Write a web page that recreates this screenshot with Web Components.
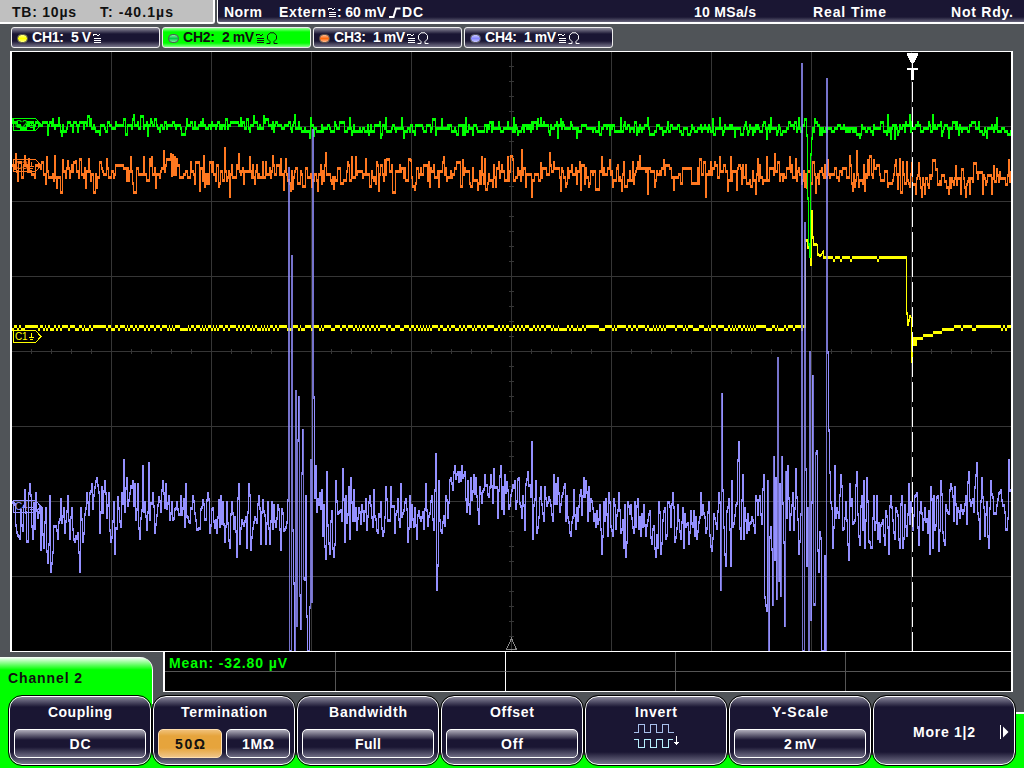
<!DOCTYPE html>
<html lang="en">
<head>
<meta charset="utf-8">
<title>Oscilloscope</title>
<style>
    body {
        margin: 0;
        width: 1024px;
        height: 768px;
        overflow: hidden;
        background: #505458;
        color: white;
        font: bold 14px/16px "Liberation Sans", Arial, sans-serif;
    }
</style>
</head>
<body>
<scope-app></scope-app>
<script>
// text stretched to a given width by letter spacing
class FitText extends HTMLElement {
    constructor() {
        super();
        const shadowRoot = this.attachShadow({ mode: 'open' });
        shadowRoot.innerHTML = `<style>
            :host { display: inline-block; height: 16px; flex: none; }
            span { display: inline-block; white-space: pre; }
            </style><span><slot></slot></span>`;
    }
    connectedCallback() {
        const w = Number(this.getAttribute('w'));
        const span = this.shadowRoot.querySelector('span');
        const count = this.textContent.length;
        this.style.width = w + 'px';
        if (count > 1) {
            const natural = span.getBoundingClientRect().width;
            span.style.letterSpacing = ((w - natural) / (count - 1)).toFixed(3) + 'px';
        }
    }
}

class ScopeSymbol extends HTMLElement {
    constructor() {
        super();
        const shapes = {
            bw: '<svg width="8" height="10" viewBox="0 0 8 10"><path d="M.5 3V2l1-1h1l2 1.5h1L7 1M.5 5.5h7M.5 7.5h7M.5 9.5h7" /></svg>',
            ohm: '<svg width="12" height="12" viewBox="0 0 12 12"><path d="M.5 11.5H4V9.5L1.5 7V3.5L4 .8h4L10.500 3.500V7L8 9.500v2h3.500" /></svg>',
            edge: '<svg width="12" height="11" viewBox="0 0 12 11"><path stroke-width="2" d="M0 10h4.500L7 1.500h4.500" /></svg>',
            next: '<svg width="10" height="16" viewBox="0 0 10 16"><path d="M1.500 1v14" /><path d="M4 2.500L9.500 8L4 13.500z" fill="currentColor" stroke="none" /></svg>',
            invert: `<svg width="48" height="26" viewBox="0 0 48 26">
                <path stroke="#a8c0ec" d="M.5 9.500h5v-8h6v8h6v-8h6v8h6v-8h6v8h5" />
                <path stroke="#b8f0ff" d="M.5 16.500h5v8h6v-8h6v8h6v-8h6v8h6v-8h4" />
                <path stroke="#fff" d="M43.500 13v8M41.500 19l2 2l2-2" />
            </svg>`
        };
        const shadowRoot = this.attachShadow({ mode: 'open' });
        shadowRoot.innerHTML = `
            <style>
            :host { display: inline-flex; flex: none; }
            svg { fill: none; stroke: currentColor; shape-rendering: crispEdges; }
            :host([name="ohm"]) svg, :host([name="edge"]) svg, :host([name="next"]) svg { shape-rendering: auto; }
            </style>
            ${shapes[this.getAttribute('name')]}
        `;
    }
}

class ScopeHeader extends HTMLElement {
    constructor() {
        super();
        const shadowRoot = this.attachShadow({ mode: 'open' });
        shadowRoot.innerHTML = `
            <style>
            :host { display: flex; gap: 2px; height: 24px; }
            div { display: flex; box-sizing: border-box; height: 24px; padding-top: 4px; border-bottom: 2px solid white; }
            .time {
                width: 215px;
                padding-left: 12px;
                gap: 24px;
                color: #111;
                background: #c0c0c0;
                border-right: 2px solid white;
                border-bottom-right-radius: 3px;
            }
            .status {
                flex: 1;
                padding-left: 6px;
                background: linear-gradient(#1a1633 0 17px, #66647a 22px);
                border-left: 1px solid white;
                border-bottom-left-radius: 3px;
            }
            scope-symbol[name="bw"] { margin: 3px 1px 0 2px; }
            scope-symbol[name="edge"] { margin: 3px 1px 0 3px; }
            .norm { margin-right: 17px; }
            .rate { margin-left: 271px; }
            .mode { margin-left: 57px; }
            .state { margin-left: 65px; }
            </style>
            <div class="time"><fit-text w="64">TB: 10µs</fit-text><fit-text w="73">T: -40.1µs</fit-text></div>
            <div class="status">
                <fit-text class="norm" w="38">Norm</fit-text>
                <fit-text w="47">Extern</fit-text><scope-symbol name="bw"></scope-symbol><fit-text w="49">: 60 mV</fit-text><scope-symbol name="edge"></scope-symbol><fit-text w="21">DC</fit-text>
                <fit-text class="rate" w="62">10 MSa/s</fit-text>
                <fit-text class="mode" w="73">Real Time</fit-text>
                <fit-text class="state" w="62">Not Rdy.</fit-text>
            </div>
        `;
    }
}

class ChannelTab extends HTMLElement {
    constructor() {
        super();
        const shadowRoot = this.attachShadow({ mode: 'open' });
        shadowRoot.innerHTML = `
            <style>
            :host {
                display: flex;
                box-sizing: border-box;
                width: 149px;
                height: 21px;
                padding: 1px 0 0 5px;
                border: 1px solid #eee;
                border-radius: 3px;
                background: linear-gradient(#8c8a9a 0, #1a1633 6px 13px, #77758a 19px);
            }
            :host([active]) { background: linear-gradient(#9f9 0, #0f0 4px 15px, #8f8 19px); color: #111; }
            i {
                width: 9px;
                height: 7px;
                margin: 5px 4px 0 0;
                border: 1px solid #555;
                border-radius: 5px;
                box-sizing: content-box;
                background: linear-gradient(#fff8, #fff0 50%, #fff8), var(--dot);
            }
            .name { margin-right: 7px; }
            scope-symbol { margin: 4px 0 0 2px; }
            scope-symbol[name="ohm"] { margin-top: 3px; }
            </style>
            <i></i><fit-text class="name" w="32">${this.getAttribute('name')}:</fit-text><slot></slot>
            <scope-symbol name="bw"></scope-symbol>
            ${this.hasAttribute('ohm') ? '<scope-symbol name="ohm"></scope-symbol>' : ''}
        `;
    }
}

// x,y pairs of the curve's turning points, in screen pixels
const CH4 = `12,502 15,504 17,532 20,538 21,510 23,530 25,490 27,541 30,484 32,526 33,538 34,503 35,528 36,493 38,517 40,507
41,549 42,508 44,547 46,508 48,562 50,496 51,571 53,552 54,526 56,526 58,538 61,499 62,522 64,508 65,532 68,496 70,538 72,508
75,541 78,533 80,571 81,508 83,541 85,514 87,493 89,514 90,493 92,484 93,508 95,487 97,478 98,485 100,532 102,487 103,512
105,481 107,517 109,493 111,541 114,502 115,553 118,497 121,526 124,460 125,511 127,478 128,505 130,493 133,481 134,505
135,484 136,519 138,484 140,538 143,466 144,511 145,502 147,529 149,463 150,519 153,493 155,532 159,497 161,511 163,481
165,507 166,484 167,508 169,496 170,519 172,502 173,519 177,502 180,514 181,496 182,514 184,499 185,526 186,484 187,516
190,522 193,496 195,513 197,529 200,528 203,500 205,519 208,493 210,532 213,508 217,532 219,500 220,526 221,496 222,523
223,502 225,541 227,502 228,523 230,547 232,502 234,528 235,517 237,556 239,484 240,543 242,520 244,525 246,517 247,547
249,484 251,549 253,528 255,517 257,522 259,496 261,543 263,500 266,543 268,502 270,543 272,502 273,528 274,505 276,526
278,505 281,549 282,509 284,530 286,527 288,500 289,168 290,651 291,651 292,256 293,530 294,583 295,651 296,391 297,625
299,397 300,595 301,628 303,430 304,578 305,579 306,496 308,651 309,651 310,607 311,460 312,601 313,130 314,397 315,497
316,466 317,511 320,493 321,508 322,490 323,535 324,505 326,558 327,472 328,525 330,553 332,511 334,556 336,481 338,513
341,510 342,520 343,469 345,541 346,496 347,522 349,487 350,538 351,478 353,520 354,490 355,520 356,508 357,529 359,508
361,523 362,505 364,520 366,499 367,529 370,496 371,505 373,526 374,490 375,516 378,532 381,502 383,535 386,487 388,520
390,520 391,487 392,506 394,506 395,532 398,499 400,526 401,484 402,516 404,510 406,499 408,541 410,496 411,526 412,505
414,526 415,508 417,538 419,511 421,520 423,512 424,528 426,484 428,525 430,513 432,496 434,529 435,490 436,454 437,589
438,565 439,481 440,520 442,532 444,516 445,525 446,496 448,517 451,478 453,489 455,466 456,478 458,472 459,481 460,472
461,480 462,466 463,477 465,472 466,499 467,511 468,481 470,513 471,478 472,499 474,475 475,493 476,478 479,523 480,487
482,502 485,475 489,496 491,475 493,502 494,469 495,487 497,487 498,517 499,490 501,466 502,508 503,487 504,513 505,475
506,492 507,482 509,508 512,490 515,481 516,508 519,478 520,503 522,517 523,496 525,529 526,484 528,472 531,496 532,442
533,538 536,481 537,532 539,517 541,487 544,520 545,487 547,505 549,497 551,505 553,520 554,475 555,503 556,484 557,503
558,478 560,511 563,493 565,484 566,520 567,496 568,517 571,535 573,517 574,490 576,528 577,508 578,520 581,490 582,514
584,478 585,496 586,481 588,520 589,487 590,510 591,499 594,520 595,514 596,526 597,511 598,523 600,505 602,553 604,502
605,520 606,499 608,535 609,493 611,526 613,535 614,499 616,528 619,493 621,532 623,520 624,547 625,505 626,556 628,502
630,513 631,505 634,532 635,502 636,526 638,499 639,528 640,517 641,535 642,514 643,526 644,505 646,535 648,520 650,511
652,543 654,526 656,556 657,535 658,547 659,502 661,553 663,520 665,508 666,538 669,502 671,526 673,493 675,541 677,528
678,505 681,538 683,508 684,547 685,514 686,526 688,523 689,543 691,511 693,526 694,511 695,535 696,517 697,538 700,517
701,493 702,514 703,505 706,532 709,502 710,535 712,550 714,514 717,528 719,493 720,502 721,589 722,394 723,490 724,527
726,565 727,511 729,499 731,565 732,481 733,526 735,515 737,503 739,442 740,528 741,538 743,475 744,538 745,508 747,532
748,514 749,529 752,517 755,532 756,496 758,514 760,496 762,523 764,475 765,597 767,610 768,481 769,651 770,537 771,527
773,604 774,457 775,559 776,478 777,598 778,358 779,580 780,484 781,595 782,457 783,503 785,625 786,472 787,517 788,466
790,529 793,493 794,529 796,469 797,497 799,553 801,514 802,64 803,651 804,651 805,223 806,469 807,565 808,508 809,651
810,352 811,619 812,502 813,376 814,604 815,604 816,453 817,451 818,550 819,571 820,532 821,538 822,651 824,651 825,556
826,651 827,79 828,352 829,430 830,472 832,508 833,547 835,466 836,517 837,508 839,517 841,475 843,529 846,502 847,520
849,559 850,484 851,505 852,499 853,523 855,520 857,472 858,514 860,544 862,496 863,529 864,481 865,547 867,478 869,541
872,547 874,496 875,529 877,496 878,538 879,523 880,541 881,525 883,520 885,544 886,511 889,553 891,496 893,520 895,538
896,508 900,547 902,496 903,547 905,505 907,535 909,484 910,523 911,502 913,529 915,496 917,493 919,544 921,502 923,529
925,508 928,532 929,511 930,553 931,487 933,547 934,496 935,529 938,496 939,550 941,481 943,532 945,544 946,505 949,513
951,484 954,520 955,487 957,523 958,508 960,517 961,505 963,513 966,496 967,523 969,472 971,505 973,499 974,511 975,487
977,463 978,513 980,538 982,478 985,535 987,502 989,547 991,481 994,513 996,513 999,493 1001,490 1003,505 1007,529
1009,460 1010,490`;

const CH3_PEAKS = `16,154 47,157 57,187 63,160 68,161 76,161 86,187 97,187 131,157 144,157 152,157 156,187 164,151 171,154
172,175 173,155 174,174 175,157 200,190 207,183 225,148 230,196 239,154 250,157 284,189 291,190 293,188 318,190 334,188
352,157 356,157 379,190 385,160 411,160 444,157 463,160 482,157 508,157 532,196 541,163 561,190 602,157 610,160 622,190
648,193 664,160 706,196 720,157 728,190 731,157 756,193 767,157 775,154 790,157 805,186 807,187 828,160 853,190 857,151
865,190 868,160 874,160 896,160 898,188 916,193 919,163 925,193 949,193 966,196 970,193 983,193 992,193 994,166`;

const CH2_PEAKS = `59,118 62,135 134,115 148,135 241,118 295,115 311,118 314,135 350,118 386,118 402,118 466,118 514,118
541,118 558,137 577,137 621,118 648,118 720,118 735,136 767,138 771,118 799,118 807,135 808,198 809,244 810,256 811,154
812,138 888,115 891,138 895,138 910,115 933,115 942,135 997,118`;

const CH1 = `12,326 805,326 806,240 807,240 808,247 810,247 811,264 812,211 813,237 814,244 816,244 817,245 818,254 820,255
823,251 824,257 906,257 907,313 908,324 910,316 911,318 912,361 913,338 914,344 915,338 916,344 917,338 922,338 923,335
932,335 933,332 941,332 942,329 953,329 954,326 1011,326`;

function parsePoints(text) {
    return text.trim().split(/\s+/).map(p => p.split(',').map(Number));
}

function random(seed) {
    return () => {
        seed = (seed * 1664525 + 1013904223) >>> 0;
        return (seed >>> 8) / 16777216;
    };
}

// fills the samples between turning points; jitter moves them off the straight line
function interpolate(points, jitter) {
    const rnd = random(3);
    const out = [];
    for (let i = 0; i < points.length - 1; i++) {
        const [x0, y0] = points[i];
        const [x1, y1] = points[i + 1];
        out[x0] = y0;
        for (let x = x0 + 1; x < x1; x++) {
            let t = (x - x0) / (x1 - x0) + (rnd() - 0.5) * jitter;
            t = Math.min(1, Math.max(0, t));
            out[x] = y0 + (y1 - y0) * t;
        }
        out[x1] = y1;
    }
    return out;
}

function noise(seed, mean, amp, hold, peaks) {
    const rnd = random(seed);
    const out = [];
    for (let x = 12; x <= 1011; x++) {
        const n = (rnd() + rnd() + rnd() - 1.5) * amp;
        out[x] = rnd() < hold && out[x - 1] ? out[x - 1] : mean(x) + Math.round(n / 3) * 3;
    }
    parsePoints(peaks).forEach(([x, y]) => {
        out[x] = y;
        // a peak is one sample wide
        if (Math.abs(out[x + 1] - mean(x)) > amp / 2) out[x + 1] = mean(x);
    });
    return out;
}

// one vertical bar per pixel column, three pixels high at least
function columns(values) {
    let d = '';
    let tall = '';
    for (let x = 12; x <= 1010; x++) {
        const a = values[x];
        const b = values[x + 1] === undefined ? a : values[x + 1];
        const top = Math.round(Math.min(a, b)) - 1;
        const bottom = Math.round(Math.max(a, b)) + 2;
        const bar = `M${x + .5} ${top}V${bottom}`;
        if (bottom - top > 140) {
            tall += bar;
        } else {
            d += bar;
        }
    }
    return { d, tall };
}

class ScopeScreen extends HTMLElement {
    constructor() {
        super();
        let grid = '';
        for (let x = 111; x < 1011; x += 100) grid += `M${x + .5} 52V651`;
        for (let y = 126; y < 651; y += 75) grid += `M12 ${y + .5}H1011`;
        for (let x = 31; x < 1011; x += 20) grid += `M${x + .5} 349V354`;
        for (let y = 66; y < 640; y += 15) grid += `M509 ${y + .5}H514`;

        const rnd = random(7);
        const ch1 = interpolate(parsePoints(CH1), 0);
        for (let x = 12; x < 1010; x++) {
            const level = x < 803 ? 0.27 : x > 956 ? 0.06 : x > 825 && x < 904 ? 0.04 : 0;
            if (rnd() < level) {
                ch1[x] += 3;
                ch1[++x] += 3;
            }
        }
        const ch2 = noise(21, x => x < 300 ? 125 : 128, 7, 0.35, CH2_PEAKS);
        ch2[813] = 128;
        const ch3 = noise(5, x => x < 300 ? 171 : x < 912 ? 174 : 178, 16, 0.35, CH3_PEAKS);
        const ch4 = interpolate(parsePoints(CH4), 0.7);

        // level traces are flat runs, so their bars do not join up
        const flat = values => {
            let d = '';
            for (let x = 12; x <= 1010; x++) {
                const next = values[x + 1];
                const step = Math.abs(next - values[x]);
                const a = step > 3 ? Math.min(values[x], next) : values[x];
                const b = step > 3 ? Math.max(values[x], next) : values[x];
                d += `M${x + .5} ${a - 1}V${b + 2}`;
            }
            return `<path stroke="#ff0" d="${d}" />`;
        };
        const trace = (values, color) => {
            const { d, tall } = columns(values);
            return `<path stroke="${color}" d="${d}" /><path stroke="${color}" opacity=".8" d="${tall}" />`;
        };
        const marker = (label, y, color) => `
            <g stroke="${color}">
                <path d="M13.5 ${y + .5}h22l5.500 6l-5.500 6h-22z" />
                <path d="M31.500 ${y + 3}v4M29 ${y + 7.5}h5M30 ${y + 9.5}h3" />
                <text x="15" y="${y + 10}" fill="${color}" stroke="none">${label}</text>
            </g>`;

        const shadowRoot = this.attachShadow({ mode: 'open' });
        shadowRoot.innerHTML = `
            <style>
            :host {
                display: block;
                width: 999px;
                height: 599px;
                margin-left: 10px;
                border: solid white;
                border-width: 1px 2px;
                background: black;
            }
            svg { display: block; fill: none; shape-rendering: crispEdges; }
            text { font: 10px "Liberation Sans", Arial, sans-serif; letter-spacing: -.2px; }
            </style>
            <svg width="999" height="599" viewBox="12 52 999 599">
                <path stroke="#363636" d="${grid}" />
                <path stroke="#888" d="M511.500 638.500l-5 11h10z" />
                ${marker('C1', 330, '#ff0')}
                ${marker('C2', 118, '#0f0')}
                ${marker('C3', 159, '#ff7820')}
                ${marker('C4', 500, '#9490ff')}
                ${trace(ch3, '#ff7820')}
                ${flat(ch1)}
                ${trace(ch2, '#0f0')}
                ${trace(ch4, '#9490ff')}
                <path stroke="white" stroke-dasharray="20 5" d="M912.500 82V651" />
                <path fill="white" d="M907 53h11v2l-4 8h-3l-4-8z" />
                <path stroke="white" d="M912.500 62v6" />
                <path fill="white" d="M907 68h11v2h-4v10h-3v-10h-4z" />
            </svg>
        `;
    }
}

class MeasurePanel extends HTMLElement {
    constructor() {
        super();
        const shadowRoot = this.attachShadow({ mode: 'open' });
        shadowRoot.innerHTML = `
            <style>
            :host {
                display: grid;
                box-sizing: border-box;
                width: 850px;
                height: 40px;
                grid-template-columns: 170px 170px 170px 170px 1fr;
                grid-template-rows: 20px 19px;
                border: solid white;
                border-width: 0 2px 1px;
                background: black;
                color: #0f0;
            }
            div { border-left: 1px solid #555; padding: 3px 0 0 4px; box-sizing: border-box; }
            div:nth-of-type(5n + 1) { border-left: 0; }
            div:nth-of-type(5n + 3) { border-left-color: white; }
            div:nth-of-type(-n + 5) { border-bottom: 1px solid #555; }
            </style>
            <div><slot></slot></div><div></div><div></div><div></div><div></div>
            <div></div><div></div><div></div><div></div><div></div>
        `;
    }
}

class SoftKey extends HTMLElement {
    constructor() {
        super();
        const shadowRoot = this.attachShadow({ mode: 'open' });
        shadowRoot.innerHTML = `
            <style>
            :host {
                display: flex;
                flex-direction: column;
                align-items: center;
                box-sizing: border-box;
                width: 142px;
                height: 69px;
                padding-top: 7px;
                border: 1px solid white;
                border-radius: 13px;
                outline: 1px solid black;
                background: linear-gradient(#88869a 0, #1a1633 10px 55px, #77758c 67px);
            }
            .values { display: flex; gap: 4px; margin-top: 9px; }
            :host([wide]) { flex-direction: row; padding: 3px 5px 0 39px; justify-content: space-between; }
            :host([wide]) .values { display: none; }
            </style>
            <slot name="label"></slot>
            <slot name="mark"></slot>
            <div class="values"><slot></slot></div>
        `;
    }
}

class KeyValue extends HTMLElement {
    constructor() {
        super();
        const shadowRoot = this.attachShadow({ mode: 'open' });
        shadowRoot.innerHTML = `
            <style>
            :host {
                display: flex;
                justify-content: center;
                box-sizing: border-box;
                width: 132px;
                height: 29px;
                padding-top: 6px;
                border: 1px solid white;
                border-radius: 5px;
                background: linear-gradient(#b0aebb 0, #1a1633 10px 17px, #77758c 28px);
            }
            :host([half]) { width: 64px; }
            :host([on]) { color: #111; background: linear-gradient(#f0c078 0, #e6a43c 6px 18px, #f0c890 28px); border-color: #ffe0b0; }
            </style>
            <slot></slot>
        `;
    }
}

class ScopeFooter extends HTMLElement {
    constructor() {
        super();
        const shadowRoot = this.attachShadow({ mode: 'open' });
        shadowRoot.innerHTML = `
            <style>
            :host {
                display: block;
                height: 116px;
                background:
                    linear-gradient(white 0 2px, #0f0 2px) 1016px 60px / 8px 56px no-repeat,
                    linear-gradient(#0f0, #0f0) 0 103px / 1024px 13px no-repeat,
                    linear-gradient(#0f0, #0f0) 0 44px / 152px 72px no-repeat;
            }
            .top { display: flex; height: 44px; justify-content: space-between; padding-right: 11px; }
            .tab {
                box-sizing: border-box;
                width: 153px;
                height: 47px;
                margin-top: 5px;
                padding: 13px 0 0 8px;
                border-right: 1px solid white;
                border-radius: 0 13px 0 0;
                background: linear-gradient(white 0, #0f0 13px);
                color: #111;
            }
            .keys { display: flex; gap: 2px; padding-left: 9px; }
            soft-key { position: relative; }
            scope-symbol[name="invert"] { margin: -6px 0 0 2px; }
            </style>
            <div class="top">
                <div class="tab"><fit-text w="74">Channel 2</fit-text></div>
                <measure-panel><fit-text w="118">Mean: -32.80 µV</fit-text></measure-panel>
            </div>
            <div class="keys">
                <soft-key><fit-text slot="label" w="64">Coupling</fit-text><key-value><fit-text w="21">DC</fit-text></key-value></soft-key>
                <soft-key><fit-text slot="label" w="86">Termination</fit-text>
                    <key-value half on><fit-text w="30">50Ω</fit-text></key-value>
                    <key-value half><fit-text w="32">1MΩ</fit-text></key-value></soft-key>
                <soft-key><fit-text slot="label" w="78">Bandwidth</fit-text><key-value><fit-text w="26">Full</fit-text></key-value></soft-key>
                <soft-key><fit-text slot="label" w="44">Offset</fit-text><key-value><fit-text w="22">Off</fit-text></key-value></soft-key>
                <soft-key><fit-text slot="label" w="42">Invert</fit-text><scope-symbol name="invert"></scope-symbol></soft-key>
                <soft-key><fit-text slot="label" w="56">Y-Scale</fit-text><key-value><fit-text w="32">2 mV</fit-text></key-value></soft-key>
                <soft-key wide><fit-text slot="label" w="62">More 1|2</fit-text><scope-symbol slot="mark" name="next"></scope-symbol></soft-key>
            </div>
        `;
    }
}

class ScopeApp extends HTMLElement {
    constructor() {
        super();
        const shadowRoot = this.attachShadow({ mode: 'open' });
        shadowRoot.innerHTML = `
            <style>
            :host { display: block; width: 1024px; height: 768px; }
            .tabs { display: flex; gap: 2px; padding: 3px 0 3px 11px; }
            </style>
            <scope-header></scope-header>
            <div class="tabs">
                <channel-tab name="CH1" style="--dot: #ff0"><fit-text w="20">5 V</fit-text></channel-tab>
                <channel-tab name="CH2" style="--dot: #0c4" active ohm><fit-text w="32">2 mV</fit-text></channel-tab>
                <channel-tab name="CH3" style="--dot: #ff6a10" ohm><fit-text w="32">1 mV</fit-text></channel-tab>
                <channel-tab name="CH4" style="--dot: #8888ff" ohm><fit-text w="32">1 mV</fit-text></channel-tab>
            </div>
            <scope-screen></scope-screen>
            <scope-footer></scope-footer>
        `;
    }
}

customElements.define('fit-text', FitText);
customElements.define('scope-symbol', ScopeSymbol);
customElements.define('scope-header', ScopeHeader);
customElements.define('channel-tab', ChannelTab);
customElements.define('scope-screen', ScopeScreen);
customElements.define('measure-panel', MeasurePanel);
customElements.define('soft-key', SoftKey);
customElements.define('key-value', KeyValue);
customElements.define('scope-footer', ScopeFooter);
customElements.define('scope-app', ScopeApp);
</script>
</body>
</html>
